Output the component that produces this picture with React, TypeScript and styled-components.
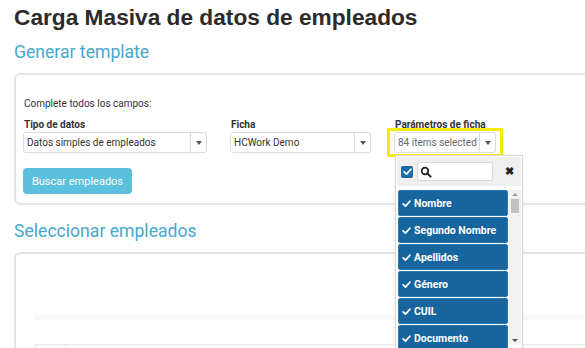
import styled, { createGlobalStyle } from "styled-components";

const GlobalStyle = createGlobalStyle`
  html, body {
    margin: 0;
    padding: 0;
    background: #fff;
    overflow: hidden;
    font-family: Roboto, "Liberation Sans", sans-serif;
    color: #333;
  }
`;

const Page = styled.div`
  width: 700px;
  padding: 0 14px;
`;

const Title = styled.h1`
  margin: 3px 0 0;
  font-family: "Liberation Sans", Arial, sans-serif;
  font-weight: 700;
  font-size: 22.7px;
  line-height: 28px;
  color: #2b2b2b;
`;

const Subtitle = styled.h2<{ $top: number }>`
  margin: ${(p) => p.$top}px 0 0;
  font-weight: 400;
  font-size: 17.6px;
  line-height: 24px;
  color: #45a8cd;
`;

const Panel = styled.div<{ $height: number; $top: number; $padTop: number }>`
  margin-top: ${(p) => p.$top}px;
  height: ${(p) => p.$height}px;
  border: 2px solid #e4e4e4;
  border-radius: 6px;
  padding: ${(p) => p.$padTop}px 7px 0;
  box-sizing: border-box;
`;

const Hint = styled.div`
  font-size: 10px;
  line-height: 14px;
  margin-left: 1px;
`;

const Fields = styled.div`
  display: flex;
  gap: 23px;
  margin-top: 7px;
`;

const Field = styled.div<{ $width: number }>`
  width: ${(p) => p.$width}px;
`;

const Label = styled.div`
  font-size: 10px;
  font-weight: 700;
  line-height: 14px;
  margin-left: 1px;
`;

const Select = styled.div<{ $muted?: boolean }>`
  display: flex;
  height: 21px;
  border: 1px solid #dcdcdc;
  border-radius: 3px;
  box-sizing: border-box;
  font-size: 10px;
  color: ${(p) => (p.$muted ? "#666" : "#333")};
  background: #fff;

  .value {
    flex: 1;
    padding-left: 3px;
    line-height: 19px;
    white-space: nowrap;
    overflow: hidden;
  }

  .caret {
    width: 15px;
    border-left: 1px solid #dcdcdc;
    display: flex;
    align-items: center;
    justify-content: center;
  }

  .caret::after {
    content: "";
    border-left: 3px solid transparent;
    border-right: 3px solid transparent;
    border-top: 4px solid #555;
  }
`;

const Anchor = styled.div`
  position: relative;
`;

const Highlight = styled.div`
  margin: -4px -7px 0;
  padding: 1px 4px 1px;
  border: 3px solid #f7ec00;
`;

const Button = styled.button`
  margin-top: 11px;
  width: 109px;
  height: 26px;
  border: none;
  border-radius: 4px;
  background: #5bc0de;
  color: #fff;
  font-family: Roboto, "Liberation Sans", sans-serif;
  font-size: 11px;
  padding: 0;
`;

const TableBand = styled.div`
  margin: 0 0 0 11px;
  height: 5px;
  background: #f9f9f9;
`;

const TableRow = styled.div`
  margin: 24px 0 0 12px;
  height: 20px;
  border: 1px solid #e6e6e6;
  border-bottom: none;
  display: flex;

  .cell {
    width: 29px;
    border-right: 1px solid #e6e6e6;
  }
`;

const Dropdown = styled.div`
  position: absolute;
  left: 1px;
  top: 27px;
  width: 128px;
  background: #fff;
  border: 1px solid #d6d6d6;
  box-shadow: 0 2px 4px rgba(0, 0, 0, 0.08);
  padding: 1px;
  box-sizing: border-box;
  z-index: 2;
`;

const DropHeader = styled.div`
  display: flex;
  align-items: center;
  height: 29px;
  background: #efefef;
  padding: 0 4px;
  gap: 4px;
`;

const CheckBox = styled.div`
  width: 12px;
  height: 12px;
  border-radius: 2px;
  background: #1c6aa5;
  display: flex;
  align-items: center;
  justify-content: center;
`;

const Search = styled.div`
  width: 72px;
  height: 17px;
  background: #fff;
  border: 1px solid #d8d8d8;
  border-radius: 2px;
  display: flex;
  align-items: center;
  padding-left: 2px;
`;

const Close = styled.div`
  margin-left: auto;
  margin-right: 3px;
  font-size: 11px;
  font-weight: 700;
  color: #222;
`;

const ListArea = styled.div`
  display: flex;
  padding: 4px 0 0 1px;
  height: 170px;
  overflow: hidden;
`;

const List = styled.div`
  width: 111px;
  display: flex;
  flex-direction: column;
  gap: 1px;
`;

const Item = styled.div`
  flex: none;
  height: 26px;
  border-radius: 3px;
  background: #17659f;
  box-shadow: inset 0 0 0 1px #2a77b0;
  color: #fff;
  font-size: 10.5px;
  font-weight: 700;
  display: flex;
  align-items: center;
  gap: 3px;
  padding-left: 4px;
`;

const Scrollbar = styled.div`
  width: 12px;
  margin-left: 1px;
  height: 155px;
  background: #f1f1f1;
  display: flex;
  flex-direction: column;
  align-items: center;

  .up,
  .down {
    height: 9px;
    display: flex;
    align-items: center;
  }

  .up::after {
    content: "";
    border-left: 3px solid transparent;
    border-right: 3px solid transparent;
    border-bottom: 3px solid #a3a3a3;
  }

  .down::after {
    content: "";
    border-left: 3px solid transparent;
    border-right: 3px solid transparent;
    border-top: 3px solid #505050;
  }

  .thumb {
    width: 8px;
    height: 14px;
    background: #c1c1c1;
  }

  .rest {
    flex: 1;
  }
`;

const Check = ({ size = 9 }: { size?: number }) => (
  <svg width={size} height={size} viewBox="0 0 12 12">
    <path d="M1.5 6.5 L4.6 9.4 L10.5 3" fill="none" stroke="#fff" strokeWidth="2.4" strokeLinecap="round" strokeLinejoin="round" />
  </svg>
);

const items = ["Nombre", "Segundo Nombre", "Apellidos", "Género", "CUIL", "Documento", "Legajo"];

const App = () => {
  return (
    <Page>
      <GlobalStyle />
      <Title>Carga Masiva de datos de empleados</Title>
      <Subtitle $top={9}>Generar template</Subtitle>

      <Panel $top={9} $height={132} $padTop={22}>
        <Hint>Complete todos los campos:</Hint>
        <Fields>
          <Field $width={184}>
            <Label>Tipo de datos</Label>
            <Select>
              <span className="value">Datos simples de empleados</span>
              <span className="caret" />
            </Select>
          </Field>
          <Field $width={141}>
            <Label>Ficha</Label>
            <Select>
              <span className="value">HCWork Demo</span>
              <span className="caret" />
            </Select>
          </Field>
          <Field $width={102}>
            <Label>Parámetros de ficha</Label>
            <Anchor>
              <Highlight>
                <Select $muted>
                  <span className="value">84 items selected</span>
                  <span className="caret" />
                </Select>
              </Highlight>
              <Dropdown>
                <DropHeader>
                  <CheckBox>
                    <Check size={9} />
                  </CheckBox>
                  <Search>
                    <svg width="12" height="12" viewBox="0 0 12 12">
                      <circle cx="5" cy="5" r="3.3" fill="none" stroke="#222" strokeWidth="1.7" />
                      <path d="M7.4 7.4 L10.6 10.6" stroke="#222" strokeWidth="2" strokeLinecap="round" />
                    </svg>
                  </Search>
                  <Close>✖</Close>
                </DropHeader>
                <ListArea>
                  <List>
                    {items.map((name) => (
                      <Item key={name}>
                        <Check />
                        {name}
                      </Item>
                    ))}
                  </List>
                  <Scrollbar>
                    <span className="up" />
                    <span className="thumb" />
                    <span className="rest" />
                    <span className="down" />
                  </Scrollbar>
                </ListArea>
              </Dropdown>
            </Anchor>
          </Field>
        </Fields>
        <Button>Buscar empleados</Button>
      </Panel>

      <Subtitle $top={14}>Seleccionar empleados</Subtitle>
      <Panel $top={9} $height={200} $padTop={61}>
        <TableBand />
        <TableRow>
          <span className="cell" />
        </TableRow>
      </Panel>
    </Page>
  );
};

export default App;
